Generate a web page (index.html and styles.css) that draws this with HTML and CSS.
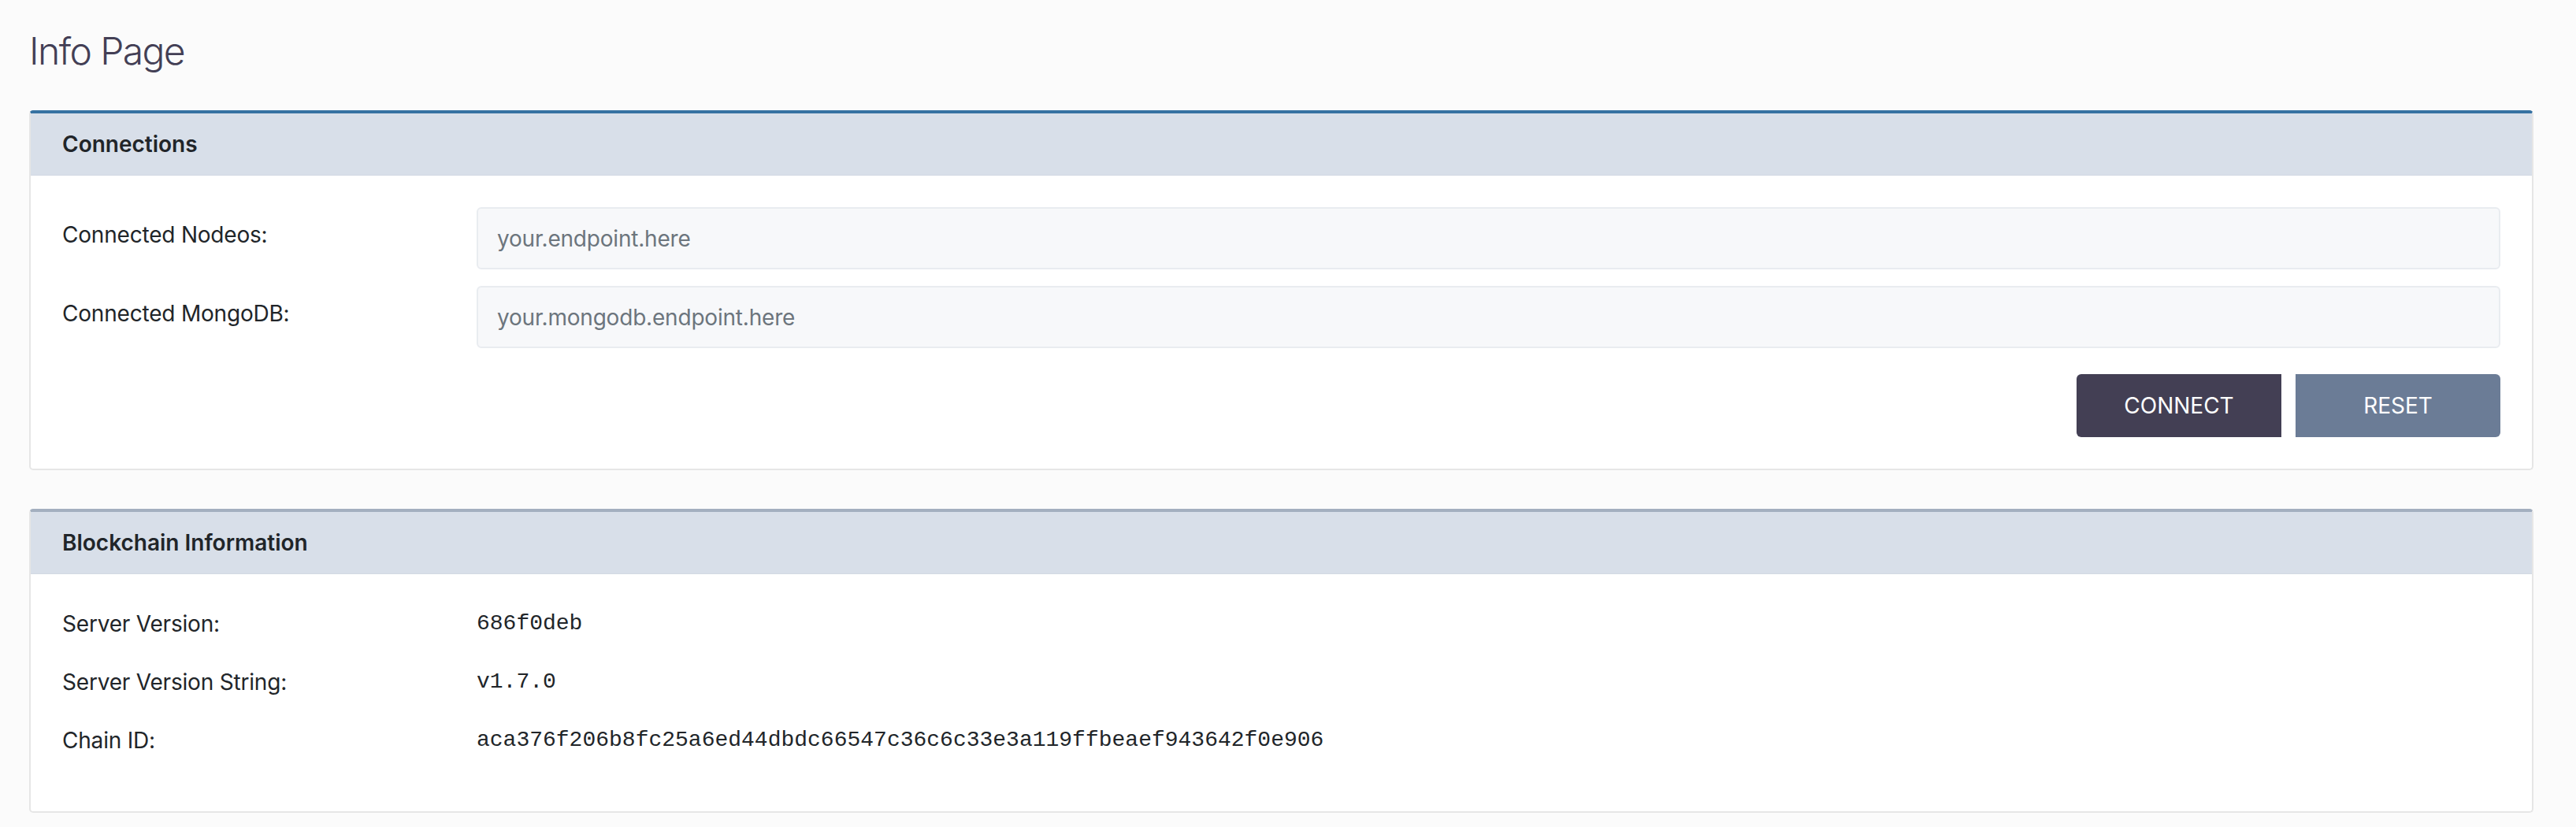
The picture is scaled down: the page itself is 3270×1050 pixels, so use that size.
FILE: index.html
```html
<!DOCTYPE html>
<html lang="en">
<head>
<meta charset="utf-8">
<title>Info Page</title>
<link rel="stylesheet" href="styles.css">
</head>
<body>
<main class="page">
  <h1 class="title">Info Page</h1>

  <section class="card card-primary">
    <header class="card-header">Connections</header>
    <div class="card-body">
      <div class="form-row">
        <label class="form-label" for="nodeos">Connected Nodeos:</label>
        <input class="form-input" id="nodeos" type="text" placeholder="your.endpoint.here">
      </div>
      <div class="form-row">
        <label class="form-label" for="mongo">Connected MongoDB:</label>
        <input class="form-input" id="mongo" type="text" placeholder="your.mongodb.endpoint.here">
      </div>
      <div class="actions">
        <button class="btn btn-dark" type="button">CONNECT</button>
        <button class="btn btn-slate" type="button">RESET</button>
      </div>
    </div>
  </section>

  <section class="card card-secondary">
    <header class="card-header">Blockchain Information</header>
    <div class="card-body info-body">
      <div class="info-row">
        <div class="info-label">Server Version:</div>
        <div class="info-value">686f0deb</div>
      </div>
      <div class="info-row">
        <div class="info-label">Server Version String:</div>
        <div class="info-value">v1.7.0</div>
      </div>
      <div class="info-row">
        <div class="info-label">Chain ID:</div>
        <div class="info-value">aca376f206b8fc25a6ed44dbdc66547c36c6c33e3a119ffbeaef943642f0e906</div>
      </div>
    </div>
  </section>
</main>
</body>
</html>
```

FILE: styles.css
```css
* {
  box-sizing: border-box;
}

html, body {
  margin: 0;
  padding: 0;
  background: #fbfbfb;
}

body {
  font-family: "Inter", "Liberation Sans", sans-serif;
  font-size: 28px;
  line-height: 42px;
  color: #212529;
}

.page {
  padding: 36px 54px 0 37px;
}

.title {
  margin: 0 0 46px;
  font-size: 48px;
  line-height: 58px;
  font-weight: 300;
  letter-spacing: -1.6px;
  color: #433f55;
}

.card {
  background: #ffffff;
  border: 2px solid #e6e6e6;
  border-top-width: 4px;
  border-radius: 5px;
}

.card-primary {
  border-top-color: #3672a2;
}

.card-secondary {
  margin-top: 49px;
  border-top-color: #a3afbf;
}

.card-header {
  background: #d8dfe9;
  padding: 18px 40px;
  font-weight: 600;
  border-bottom: 1px solid #d2d9e3;
}

.card-body {
  padding: 40px 40px 40px;
}

.form-row {
  display: grid;
  grid-template-columns: 526px 1fr;
  margin-bottom: 21px;
}

.form-label {
  padding-top: 14px;
  letter-spacing: -0.2px;
}

.form-input {
  height: 79px;
  border: 2px solid #e9ecf0;
  border-radius: 6px;
  background: #f7f8fa;
  padding: 0 24px;
  font-family: "Inter", "Liberation Sans", sans-serif;
  font-size: 28px;
  letter-spacing: -0.2px;
  color: #495057;
  outline: none;
}

.form-input::placeholder {
  color: #6c757d;
  opacity: 1;
}

.actions {
  display: flex;
  justify-content: flex-end;
  gap: 18px;
  margin-top: 33px;
}

.btn {
  width: 260px;
  height: 80px;
  border: none;
  color: #ffffff;
  font-family: "Inter", "Liberation Sans", sans-serif;
  font-size: 28px;
  font-weight: 400;
  padding: 0;
}

.btn-dark {
  background: #433f54;
  border-radius: 6px 0 0 6px;
}

.btn-slate {
  background: #6b7c96;
  border-radius: 0 6px 6px 0;
}

.info-body {
  padding: 42px 40px 69px;
  display: flex;
  flex-direction: column;
  gap: 32px;
}

.info-row {
  display: grid;
  grid-template-columns: 526px 1fr;
}

.info-label {
  letter-spacing: -0.2px;
}

.info-value {
  font-family: "Liberation Mono", "DejaVu Sans Mono", monospace;
  font-size: 28px;
}
```
